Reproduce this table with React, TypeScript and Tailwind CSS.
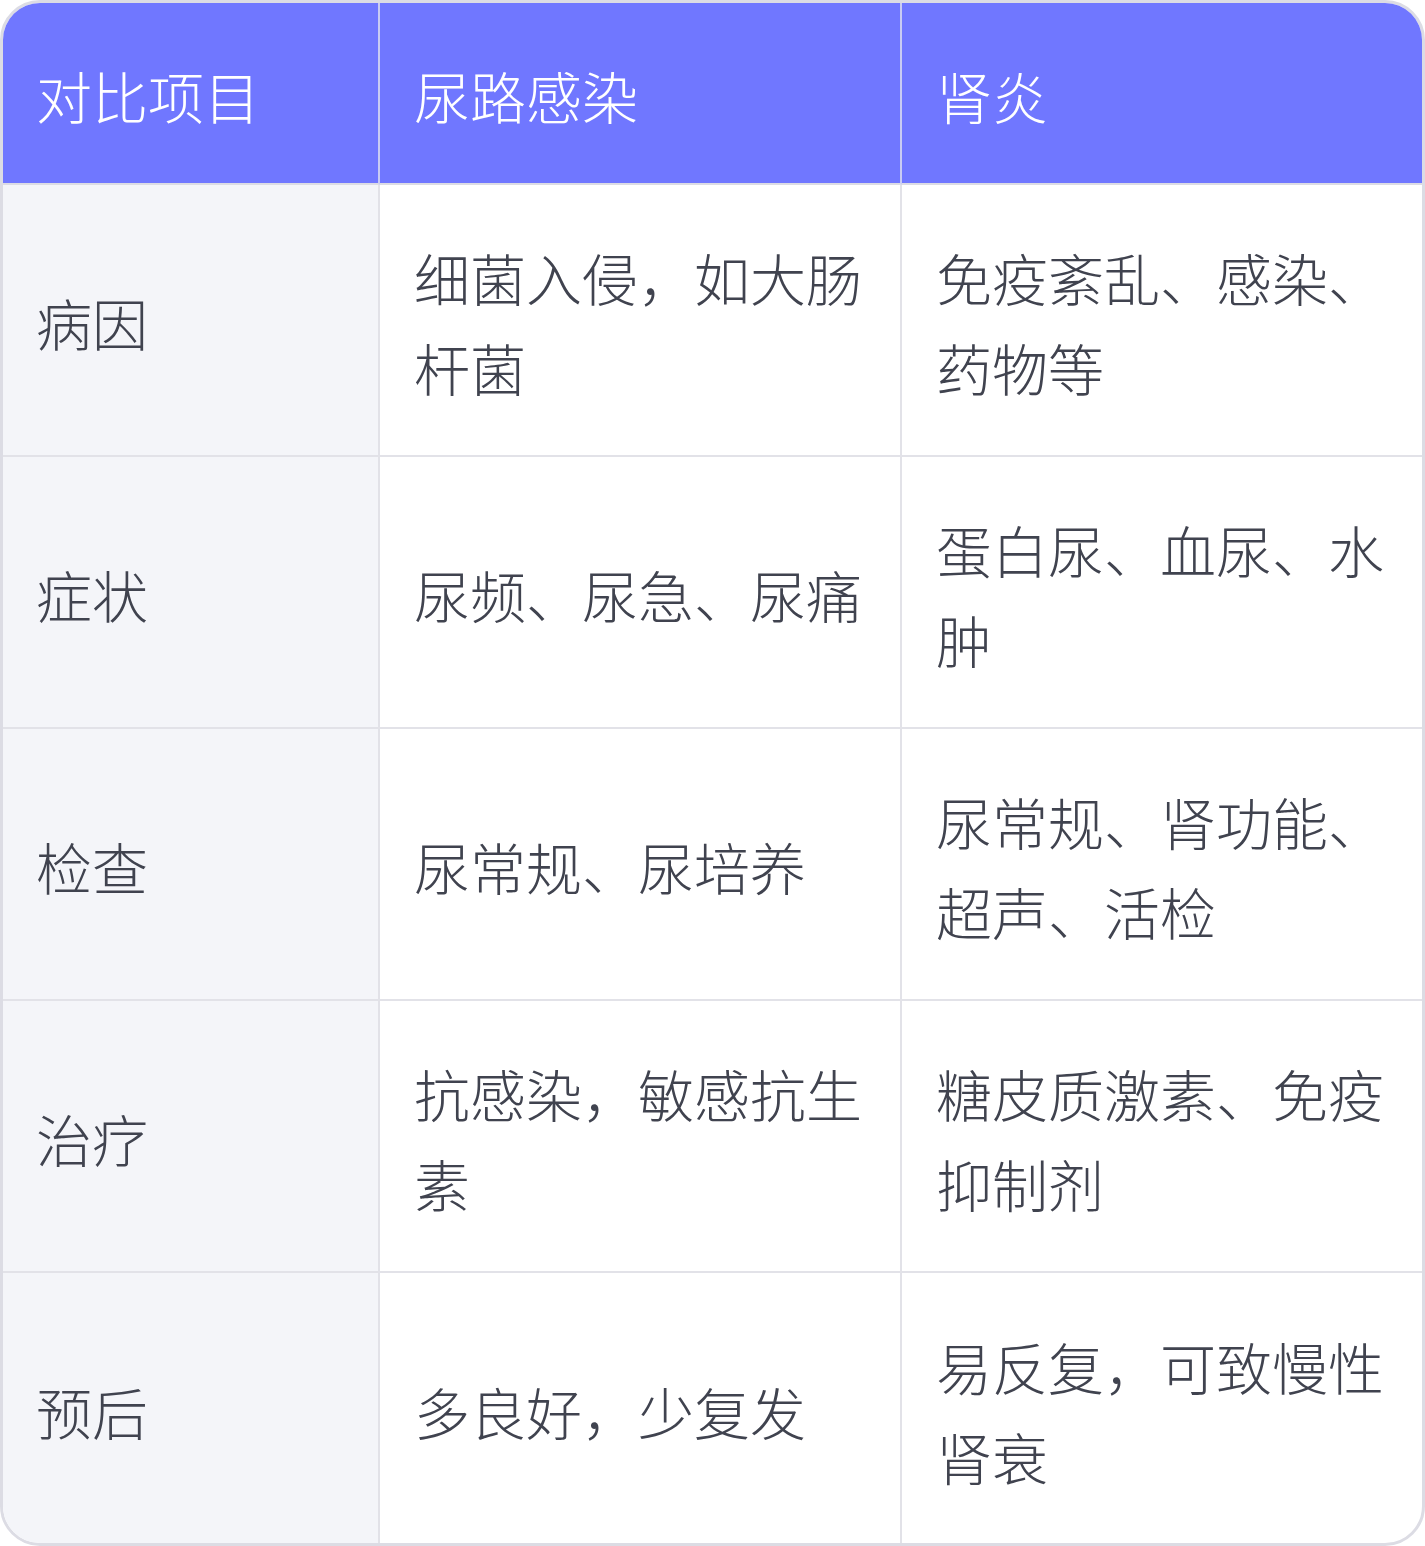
const rows = [
  { item: "病因", uti: "细菌入侵，如大肠杆菌", nephritis: "免疫紊乱、感染、药物等" },
  { item: "症状", uti: "尿频、尿急、尿痛", nephritis: "蛋白尿、血尿、水肿" },
  { item: "检查", uti: "尿常规、尿培养", nephritis: "尿常规、肾功能、超声、活检" },
  { item: "治疗", uti: "抗感染，敏感抗生素", nephritis: "糖皮质激素、免疫抑制剂" },
  { item: "预后", uti: "多良好，少复发", nephritis: "易反复，可致慢性肾衰" },
];

const font = { fontFamily: '"Noto Sans CJK SC", "Noto Sans", sans-serif' };

export default function App() {
  return (
    <div
      className="w-[1425px] h-[1546px] bg-white text-[56px] leading-[90px] font-light text-[#40434f]"
      style={font}
    >
      <div className="h-full rounded-[40px] border-[3px] border-[#dcdce4] overflow-hidden grid grid-cols-[377px_522px_520px] grid-rows-[182px_repeat(5,272px)]">
        <div className="bg-[#7077ff] text-white pl-[33px] pt-[47px] border-r-2 border-b-2 border-r-[#c9cbf3] border-b-[#dcdce4]">
          对比项目
        </div>
        <div className="bg-[#7077ff] text-white pl-[34px] pt-[47px] border-r-2 border-b-2 border-r-[#c9cbf3] border-b-[#dcdce4]">
          尿路感染
        </div>
        <div className="bg-[#7077ff] text-white pl-[34px] pt-[47px] border-b-2 border-b-[#dcdce4]">
          肾炎
        </div>
        {rows.map((r, i) => {
          const last = i === rows.length - 1;
          return [
            <div
              key={r.item + "a"}
              className={`bg-[#f4f5f9] pl-[33px] pt-[3px] flex items-center border-r-2 border-[#e2e2e8] ${last ? "" : "border-b-2"}`}
            >
              {r.item}
            </div>,
            <div
              key={r.item + "b"}
              className={`pl-[34px] pr-[36px] pt-[3px] flex items-center border-r-2 border-[#e2e2e8] ${last ? "" : "border-b-2"}`}
            >
              <span>{r.uti}</span>
            </div>,
            <div
              key={r.item + "c"}
              className={`pl-[34px] pr-[34px] pt-[3px] flex items-center border-[#e2e2e8] ${last ? "" : "border-b-2"}`}
            >
              <span>{r.nephritis}</span>
            </div>,
          ];
        })}
      </div>
    </div>
  );
}
